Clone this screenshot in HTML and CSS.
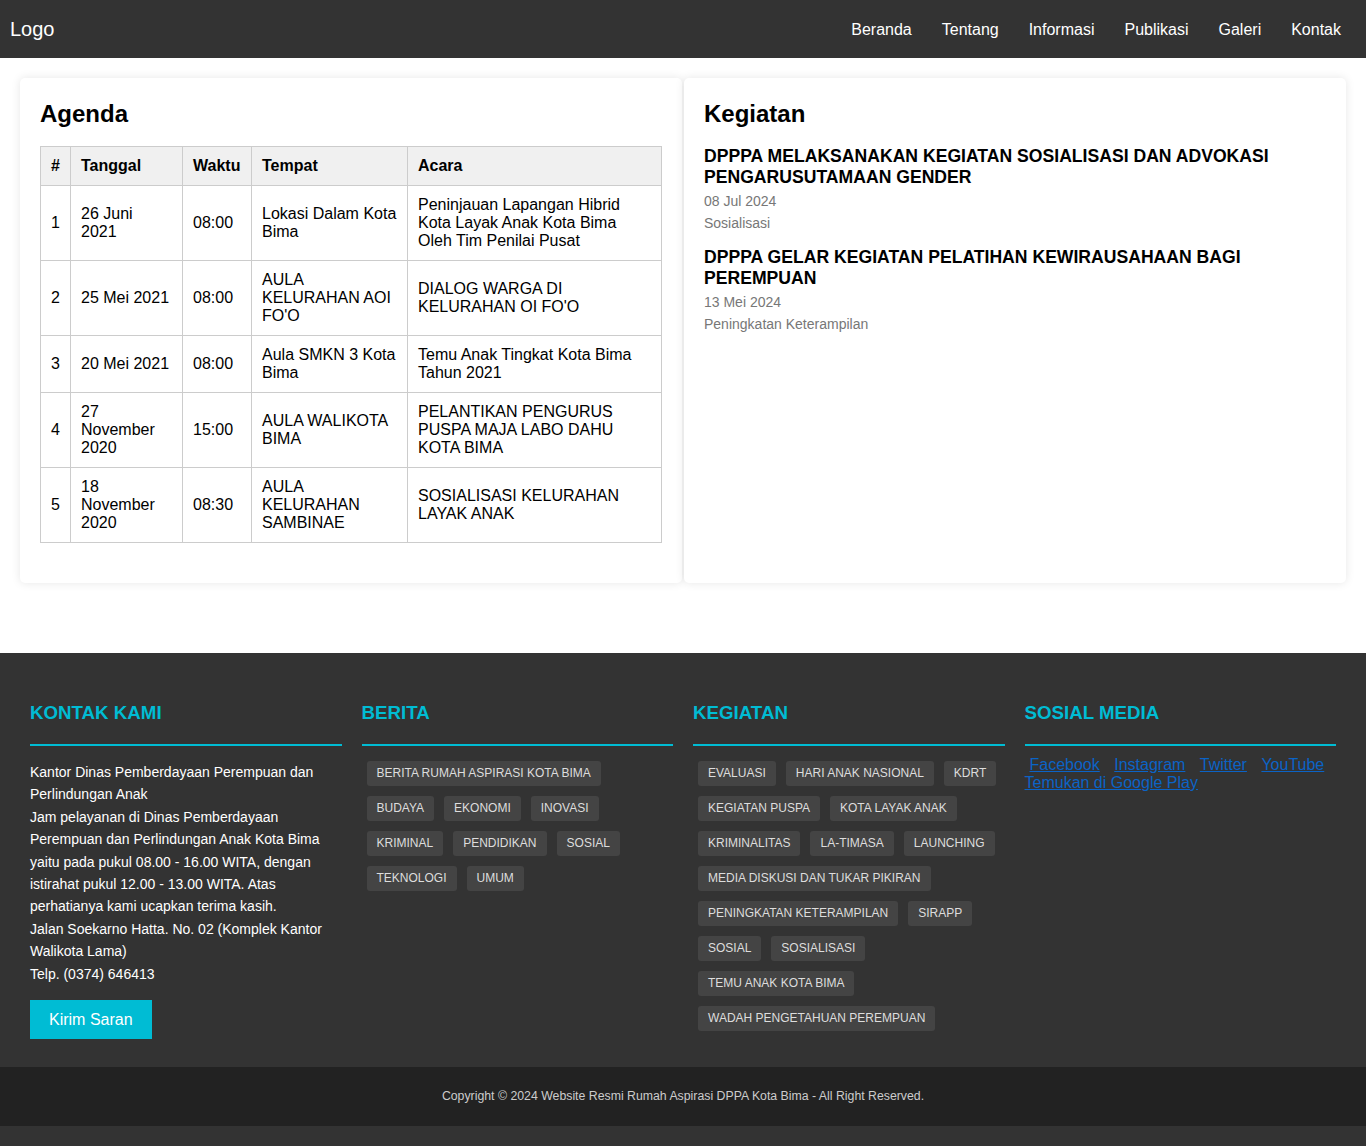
FILE: index.html
```html
<!DOCTYPE html>
<html lang="id">
<head>
<meta charset="utf-8">
<title>Rumah Aspirasi DPPA Kota Bima</title>
<link rel="stylesheet" href="styles.css">
</head>
<body>
<header class="topbar">
  <div class="logo">Logo</div>
  <nav class="nav">
    <a href="#">Beranda</a>
    <a href="#">Tentang</a>
    <a href="#">Informasi</a>
    <a href="#">Publikasi</a>
    <a href="#">Galeri</a>
    <a href="#">Kontak</a>
  </nav>
</header>

<main class="main">
  <section class="card">
    <h2 class="card-title">Agenda</h2>
    <table class="agenda">
      <colgroup>
        <col class="c-no"><col class="c-date"><col class="c-time"><col class="c-place"><col class="c-event">
      </colgroup>
      <thead>
        <tr><th>#</th><th>Tanggal</th><th>Waktu</th><th>Tempat</th><th>Acara</th></tr>
      </thead>
      <tbody>
        <tr><td>1</td><td>26 Juni 2021</td><td>08:00</td><td>Lokasi Dalam Kota Bima</td><td>Peninjauan Lapangan Hibrid Kota Layak Anak Kota Bima Oleh Tim Penilai Pusat</td></tr>
        <tr><td>2</td><td>25 Mei 2021</td><td>08:00</td><td>AULA KELURAHAN AOI FO'O</td><td>DIALOG WARGA DI KELURAHAN OI FO'O</td></tr>
        <tr><td>3</td><td>20 Mei 2021</td><td>08:00</td><td>Aula SMKN 3 Kota Bima</td><td>Temu Anak Tingkat Kota Bima Tahun 2021</td></tr>
        <tr><td>4</td><td>27 November 2020</td><td>15:00</td><td>AULA WALIKOTA BIMA</td><td>PELANTIKAN PENGURUS PUSPA MAJA LABO DAHU KOTA BIMA</td></tr>
        <tr><td>5</td><td>18 November 2020</td><td>08:30</td><td>AULA KELURAHAN SAMBINAE</td><td>SOSIALISASI KELURAHAN LAYAK ANAK</td></tr>
      </tbody>
    </table>
  </section>

  <section class="card">
    <h2 class="card-title">Kegiatan</h2>
    <article class="post">
      <h3 class="post-title">DPPPA MELAKSANAKAN KEGIATAN SOSIALISASI DAN ADVOKASI PENGARUSUTAMAAN GENDER</h3>
      <p class="post-meta">08 Jul 2024</p>
      <p class="post-meta">Sosialisasi</p>
    </article>
    <article class="post">
      <h3 class="post-title">DPPPA GELAR KEGIATAN PELATIHAN KEWIRAUSAHAAN BAGI PEREMPUAN</h3>
      <p class="post-meta">13 Mei 2024</p>
      <p class="post-meta">Peningkatan Keterampilan</p>
    </article>
  </section>
</main>

<footer class="footer">
  <div class="footer-cols">
    <div class="fcol">
      <h3 class="fhead">KONTAK KAMI</h3>
      <p class="ftext">Kantor Dinas Pemberdayaan Perempuan dan Perlindungan Anak<br>
      Jam pelayanan di Dinas Pemberdayaan Perempuan dan Perlindungan Anak Kota Bima yaitu pada pukul 08.00 - 16.00 WITA, dengan istirahat pukul 12.00 - 13.00 WITA. Atas perhatianya kami ucapkan terima kasih.<br>
      Jalan Soekarno Hatta. No. 02 (Komplek Kantor Walikota Lama)<br>
      Telp. (0374) 646413</p>
      <a class="btn" href="#">Kirim Saran</a>
    </div>
    <div class="fcol">
      <h3 class="fhead">BERITA</h3>
      <div class="tags">
        <a class="tag" href="#">BERITA RUMAH ASPIRASI KOTA BIMA</a>
        <a class="tag" href="#">BUDAYA</a>
        <a class="tag" href="#">EKONOMI</a>
        <a class="tag" href="#">INOVASI</a>
        <a class="tag" href="#">KRIMINAL</a>
        <a class="tag" href="#">PENDIDIKAN</a>
        <a class="tag" href="#">SOSIAL</a>
        <a class="tag" href="#">TEKNOLOGI</a>
        <a class="tag" href="#">UMUM</a>
      </div>
    </div>
    <div class="fcol">
      <h3 class="fhead">KEGIATAN</h3>
      <div class="tags">
        <a class="tag" href="#">EVALUASI</a>
        <a class="tag" href="#">HARI ANAK NASIONAL</a>
        <a class="tag" href="#">KDRT</a>
        <a class="tag" href="#">KEGIATAN PUSPA</a>
        <a class="tag" href="#">KOTA LAYAK ANAK</a>
        <a class="tag" href="#">KRIMINALITAS</a>
        <a class="tag" href="#">LA-TIMASA</a>
        <a class="tag" href="#">LAUNCHING</a>
        <a class="tag" href="#">MEDIA DISKUSI DAN TUKAR PIKIRAN</a>
        <a class="tag" href="#">PENINGKATAN KETERAMPILAN</a>
        <a class="tag" href="#">SIRAPP</a>
        <a class="tag" href="#">SOSIAL</a>
        <a class="tag" href="#">SOSIALISASI</a>
        <a class="tag" href="#">TEMU ANAK KOTA BIMA</a>
        <a class="tag" href="#">WADAH PENGETAHUAN PEREMPUAN</a>
      </div>
    </div>
    <div class="fcol">
      <h3 class="fhead">SOSIAL MEDIA</h3>
      <div class="social">
        <a href="#">Facebook</a> <a href="#">Instagram</a> <a href="#">Twitter</a> <a href="#">YouTube</a>
      </div>
      <a class="play" href="#">Temukan di Google Play</a>
    </div>
  </div>
  <div class="copyright">Copyright © 2024 Website Resmi Rumah Aspirasi DPPA Kota Bima - All Right Reserved.</div>
</footer>
</body>
</html>
```

FILE: styles.css
```css
* { box-sizing: border-box; }

body {
  margin: 0;
  font-family: "Liberation Sans", Arial, sans-serif;
  color: #000;
  background: #fff;
}

.topbar {
  height: 58px;
  background: #333;
  display: flex;
  align-items: center;
  justify-content: space-between;
  padding: 0 10px;
}

.logo {
  color: #fff;
  font-size: 20px;
}

.nav {
  display: flex;
  padding-top: 1px;
}

.nav a {
  color: #fff;
  text-decoration: none;
  font-size: 16px;
  padding: 0 15px;
}

.main {
  display: grid;
  grid-template-columns: 1fr 1fr;
  gap: 2px;
  padding: 20px;
  margin-bottom: 50px;
}

.card {
  background: #fff;
  border-radius: 5px;
  box-shadow: 0 0 10px rgba(0, 0, 0, 0.1);
  padding: 20px;
}

.card-title {
  font-size: 24px;
  font-weight: bold;
  margin: 2px 0 18px;
  line-height: 28px;
}

.agenda {
  width: 100%;
  border-collapse: collapse;
  table-layout: fixed;
  font-size: 16px;
  margin-bottom: 20px;
}

.c-no { width: 30px; }
.c-date { width: 112px; }
.c-time { width: 69px; }
.c-place { width: 156px; }
.c-event { width: auto; }

.agenda th,
.agenda td {
  border: 1px solid #ccc;
  padding: 10px;
  text-align: left;
  line-height: 18px;
}

.agenda th {
  background: #f0f0f0;
  font-weight: bold;
}

.post {
  margin-bottom: 16px;
}

.post-title {
  font-size: 17.6px;
  font-weight: bold;
  line-height: 21px;
  margin: 0 0 5px;
}

.post-meta {
  margin: 0 0 6px;
  font-size: 14px;
  line-height: 16px;
  color: #777;
}

.footer {
  background: #333;
  padding-bottom: 20px;
}

.footer-cols {
  display: grid;
  grid-template-columns: repeat(4, 1fr);
  gap: 20px;
  padding: 48px 30px 28px;
}

.fhead {
  color: #00bcd4;
  font-size: 18.72px;
  font-weight: bold;
  line-height: 23px;
  margin: 0 0 15px;
  padding-bottom: 20px;
  border-bottom: 2px solid #00bcd4;
}

.ftext {
  color: #fff;
  font-size: 14px;
  line-height: 22.4px;
  margin: 0 0 15px;
}

.btn {
  display: inline-block;
  background: #00bcd4;
  color: #fff;
  font-size: 16px;
  line-height: 19px;
  padding: 10px 19px;
  text-decoration: none;
}

.tags {
  display: flex;
  flex-wrap: wrap;
  align-items: flex-start;
  margin-top: -5px;
}

.tag {
  display: inline-block;
  background: #444;
  color: #ddd;
  font-size: 12px;
  line-height: 15px;
  padding: 5px 10px;
  margin: 5px;
  border-radius: 3px;
  text-decoration: none;
}

.social {
  margin-top: -5px;
  font-size: 16px;
  line-height: 18px;
}

.social a {
  color: #0b63c6;
  margin: 0 5px;
}

.play {
  color: #0b63c6;
  font-size: 16px;
  line-height: 18px;
}

.copyright {
  background: #222;
  color: #ccc;
  font-size: 12.3px;
  line-height: 19px;
  padding: 20px;
  text-align: center;
}
```
